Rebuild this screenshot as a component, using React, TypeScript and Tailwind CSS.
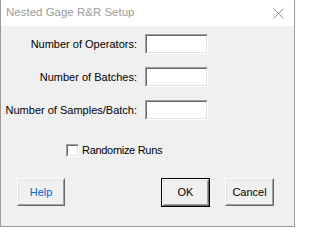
import React from "react";

function Sunken({ className = "", children }: { className?: string; children?: React.ReactNode }) {
  return (
    <div className={`border border-t-[#a0a0a0] border-l-[#a0a0a0] border-r-white border-b-white ${className}`}>
      <div className="w-full h-full border border-t-[#696969] border-l-[#696969] border-r-[#e3e3e3] border-b-[#e3e3e3] bg-white">
        {children}
      </div>
    </div>
  );
}

function Raised({ className = "", children, textClass = "text-black" }: { className?: string; children?: React.ReactNode; textClass?: string }) {
  return (
    <div className={`border border-t-white border-l-white border-r-[#696969] border-b-[#696969] ${className}`}>
      <div className={`w-full h-full border border-t-[#e3e3e3] border-l-[#e3e3e3] border-r-[#a0a0a0] border-b-[#a0a0a0] bg-[#f0f0f0] flex items-center justify-center ${textClass}`}>
        {children}
      </div>
    </div>
  );
}

export default function App() {
  const rows = ["Number of Operators:", "Number of Batches:", "Number of Samples/Batch:"];
  return (
    <div className="w-[295px] h-[227px] bg-[#f0f0f0] border-x border-b border-[#9a9a9a] flex flex-col font-['Liberation_Sans',Arial,sans-serif] text-[11px] text-black leading-none overflow-hidden">
      <div className="h-[26px] bg-white flex items-center justify-between pl-[5px] pr-[10px] shrink-0">
        <span className="text-[#9b9b9b] text-[11.5px]">Nested Gage R&amp;R Setup</span>
        <svg width="11" height="11" viewBox="0 0 11 11">
          <path d="M0.5 0.5 L10.5 10.5 M10.5 0.5 L0.5 10.5" stroke="#8f8f8f" strokeWidth="1" />
        </svg>
      </div>
      <div className="flex flex-col flex-1">
        <div className="flex flex-col gap-[13px] pt-[8px]">
          {rows.map((r) => (
            <div key={r} className="flex items-center h-[20px]">
              <div className="w-[136px] text-right">{r}</div>
              <Sunken className="ml-[8px] w-[63px] h-[20px]" />
            </div>
          ))}
        </div>
        <div className="flex items-center mt-[24px] pl-[65px] h-[13px]">
          <Sunken className="w-[13px] h-[13px]" />
          <span className="ml-[3px] tracking-[-0.3px]">Randomize Runs</span>
        </div>
        <div className="flex items-start mt-[21px] pl-[16px] pr-[20px]">
          <Raised className="w-[48px] h-[28px]" textClass="text-[#0066cc]">Help</Raised>
          <div className="flex-1" />
          <div className="w-[49px] h-[29px] border border-black">
            <Raised className="w-full h-full">OK</Raised>
          </div>
          <Raised className="ml-[15px] w-[49px] h-[28px]">Cancel</Raised>
        </div>
      </div>
    </div>
  );
}
